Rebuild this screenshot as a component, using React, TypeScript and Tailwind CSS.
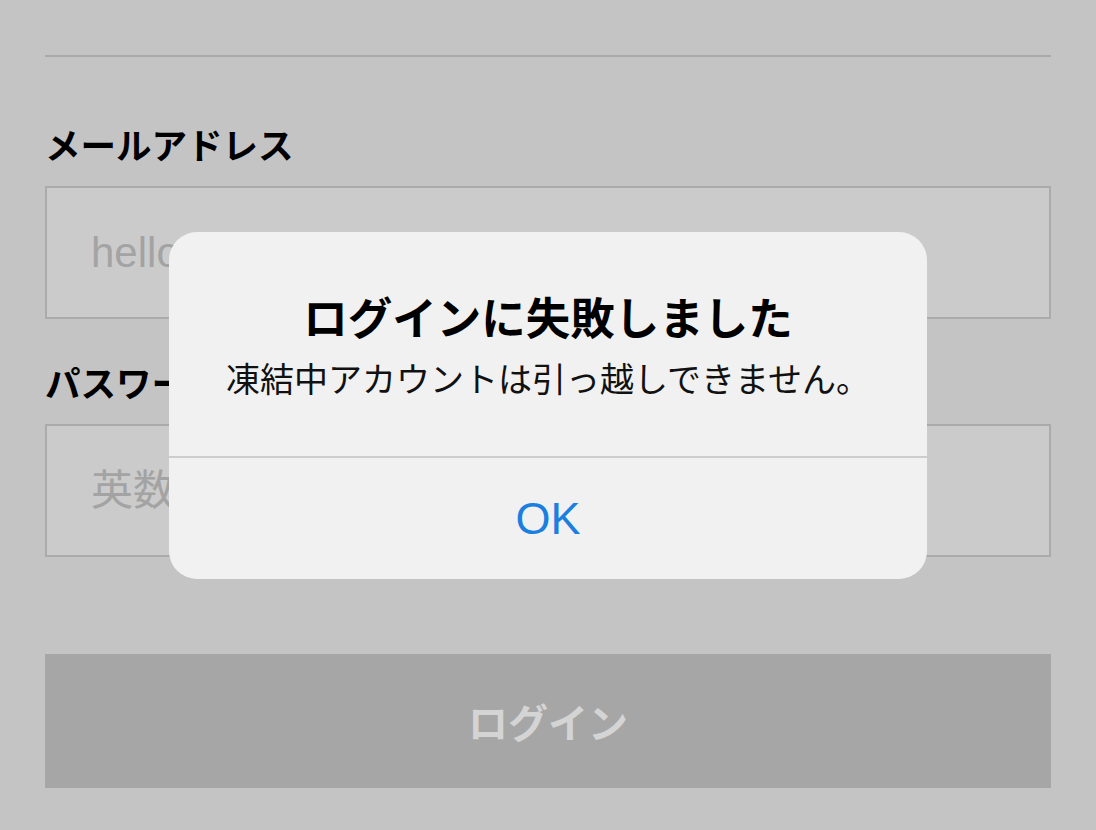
import React from 'react';

const jp = { fontFamily: '"Noto Sans CJK JP", "Noto Sans", sans-serif' };
const latin = { fontFamily: '"Liberation Sans", "Noto Sans CJK JP", sans-serif' };

function Field({ label, placeholder, mt }: { label: string; placeholder: string; mt: string }) {
  return (
    <div className={mt}>
      <div className="text-[35.5px] leading-[40px] font-bold text-black" style={jp}>
        {label}
      </div>
      <div className="mt-[22px] h-[133px] border-2 border-[#ababab] bg-[#cbcbcb] flex items-center pl-[44px]">
        <span className="text-[42px] text-[#a3a3a3]" style={latin}>
          {placeholder}
        </span>
      </div>
    </div>
  );
}

function App() {
  return (
    <div className="relative h-[830px] w-full overflow-hidden bg-[#c4c4c4]">
      <div className="px-[45px] pt-[55px]">
        <div className="h-[2px] bg-[#aaaaaa]" />

        <Field label="メールアドレス" placeholder="hello@example.com" mt="mt-[67px]" />
        <Field label="パスワード" placeholder="英数字を含む8文字以上" mt="mt-[43px]" />

        <button
          className="mt-[97px] w-full h-[134px] bg-[#a6a6a6] text-[#d4d4d4] text-[40px] font-bold flex items-center justify-center"
          style={jp}
        >
          ログイン
        </button>
      </div>

      {/* Alert */}
      <div className="absolute left-[169px] top-[232px] w-[758px] h-[347px] rounded-[28px] bg-[#f1f1f1] flex flex-col overflow-hidden">
        <div className="h-[224px] pt-[58px] text-center" style={jp}>
          <div className="text-[44.5px] leading-[52px] font-bold text-black">ログインに失敗しました</div>
          <div className="mt-[16px] text-[34px] leading-[40px] text-[#111111]">
            凍結中アカウントは引っ越しできません。
          </div>
        </div>
        <div className="h-[2px] bg-[#cdcdcd]" />
        <div className="flex-1 flex items-center justify-center">
          <span className="text-[45px] text-[#1b7fe0]" style={latin}>
            OK
          </span>
        </div>
      </div>
    </div>
  );
}

export default App;
